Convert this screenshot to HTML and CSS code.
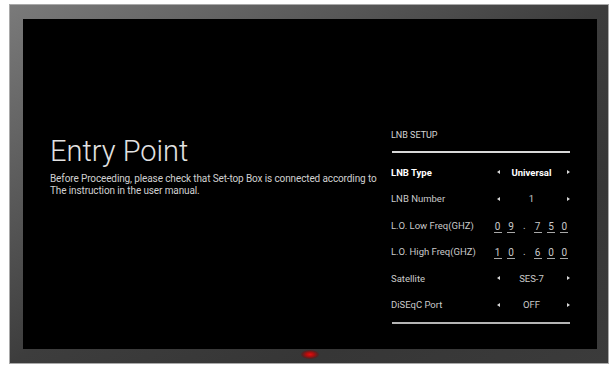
FILE: index.html
```html
<!DOCTYPE html>
<html lang="en">
<head>
    <meta charset="UTF-8">
    <meta name="viewport" content="width=device-width, initial-scale=1.0">
    <title>Entry Point - LNB Setup</title>
    <link rel="stylesheet" href="styles.css">
</head>
<body>
    <div class="tv">
        <div class="screen">
            <div class="intro">
                <h1>Entry Point</h1>
                <p>Before Proceeding, please check that Set-top Box is connected according to<br>The instruction in the user manual.</p>
            </div>

            <div class="panel">
                <div class="panel-title">LNB SETUP</div>
                <div class="rule"></div>

                <div class="rows">
                    <div class="row active">
                        <span class="label">LNB Type</span>
                        <div class="picker">
                            <span class="arrow left"></span>
                            <span class="value">Universal</span>
                            <span class="arrow right"></span>
                        </div>
                    </div>
                    <div class="row">
                        <span class="label">LNB Number</span>
                        <div class="picker">
                            <span class="arrow left"></span>
                            <span class="value">1</span>
                            <span class="arrow right"></span>
                        </div>
                    </div>
                    <div class="row">
                        <span class="label">L.O. Low Freq(GHZ)</span>
                        <div class="digits">
                            <span class="digit">0</span>
                            <span class="digit">9</span>
                            <span class="dot">.</span>
                            <span class="digit">7</span>
                            <span class="digit">5</span>
                            <span class="digit">0</span>
                        </div>
                    </div>
                    <div class="row">
                        <span class="label">L.O. High Freq(GHZ)</span>
                        <div class="digits">
                            <span class="digit">1</span>
                            <span class="digit">0</span>
                            <span class="dot">.</span>
                            <span class="digit">6</span>
                            <span class="digit">0</span>
                            <span class="digit">0</span>
                        </div>
                    </div>
                    <div class="row">
                        <span class="label">Satellite</span>
                        <div class="picker">
                            <span class="arrow left"></span>
                            <span class="value">SES-7</span>
                            <span class="arrow right"></span>
                        </div>
                    </div>
                    <div class="row">
                        <span class="label">DiSEqC Port</span>
                        <div class="picker">
                            <span class="arrow left"></span>
                            <span class="value">OFF</span>
                            <span class="arrow right"></span>
                        </div>
                    </div>
                </div>

                <div class="rule bottom"></div>
            </div>
        </div>

        <div class="base">
            <span class="led"></span>
        </div>
    </div>
</body>
</html>
```

FILE: styles.css
```css
* {
    margin: 0;
    padding: 0;
    box-sizing: border-box;
}

body {
    font-family: Roboto, "Liberation Sans", sans-serif;
    background: #fff;
    width: 613px;
    height: 369px;
    overflow: hidden;
}

/* TV bezel */
.tv {
    width: 600px;
    height: 360px;
    margin: 4px 0 0 9px;
    border: 1px solid #a9a9a9;
    padding: 14px 11px 0 13px;
    background: linear-gradient(to bottom right, #7a7a7a 0%, #5c5c5c 25%, #3d3d3d 50%, #363636 75%, #3b3b3b 100%);
    display: flex;
    flex-direction: column;
}

.screen {
    height: 330px;
    background: #000;
    display: flex;
    color: #d4d4d4;
}

.base {
    flex: 1;
    display: flex;
    justify-content: center;
    align-items: center;
}

.led {
    width: 18px;
    height: 9px;
    margin-top: -3px;
    border-radius: 50%;
    background: radial-gradient(ellipse at center, #e01010 0%, #b00c0c 30%, rgba(120, 10, 10, 0.45) 60%, rgba(60, 60, 60, 0) 100%);
}

/* Left intro text */
.intro {
    flex: 1;
    padding: 116px 0 0 27px;
}

.intro h1 {
    font-size: 29px;
    line-height: 33px;
    font-weight: 300;
    color: #e2e2e2;
    margin-bottom: 5px;
}

.intro p {
    font-size: 10px;
    line-height: 12px;
    letter-spacing: -0.12px;
    color: #d0d0d0;
    white-space: nowrap;
}

/* LNB setup panel */
.panel {
    width: 180px;
    margin-right: 26px;
    padding-top: 110px;
}

.panel-title {
    font-size: 9px;
    line-height: 12px;
    color: #d6d6d6;
    margin-bottom: 10px;
}

.rule {
    height: 2px;
    margin: 0 1px;
    background: #d8d8d8;
}

.rule.bottom {
    margin-top: 4px;
    background: #b4b4b4;
}

.rows {
    margin-top: 6px;
}

.row {
    height: 26.5px;
    display: flex;
    align-items: center;
    font-size: 9.5px;
    color: #cacaca;
}

.row.active {
    color: #fff;
    font-weight: 700;
}

.label {
    flex: 1;
}

.picker {
    width: 79px;
    display: grid;
    grid-template-columns: 12px 1fr 12px;
    align-items: center;
}

.value {
    text-align: center;
}

.arrow {
    width: 0;
    height: 0;
    border-top: 2.5px solid transparent;
    border-bottom: 2.5px solid transparent;
}

.arrow.left {
    justify-self: center;
    border-right: 3.5px solid #d8d8d8;
}

.arrow.right {
    justify-self: end;
    margin-right: 1px;
    border-left: 3.5px solid #d8d8d8;
}

.digits {
    width: 80px;
    display: grid;
    grid-template-columns: repeat(6, 1fr);
    justify-items: center;
    align-items: center;
    font-size: 10px;
}

.digit {
    width: 8px;
    text-align: center;
    line-height: 11px;
    padding-top: 3px;
    border-bottom: 1.5px solid #a8a8a8;
}
```
